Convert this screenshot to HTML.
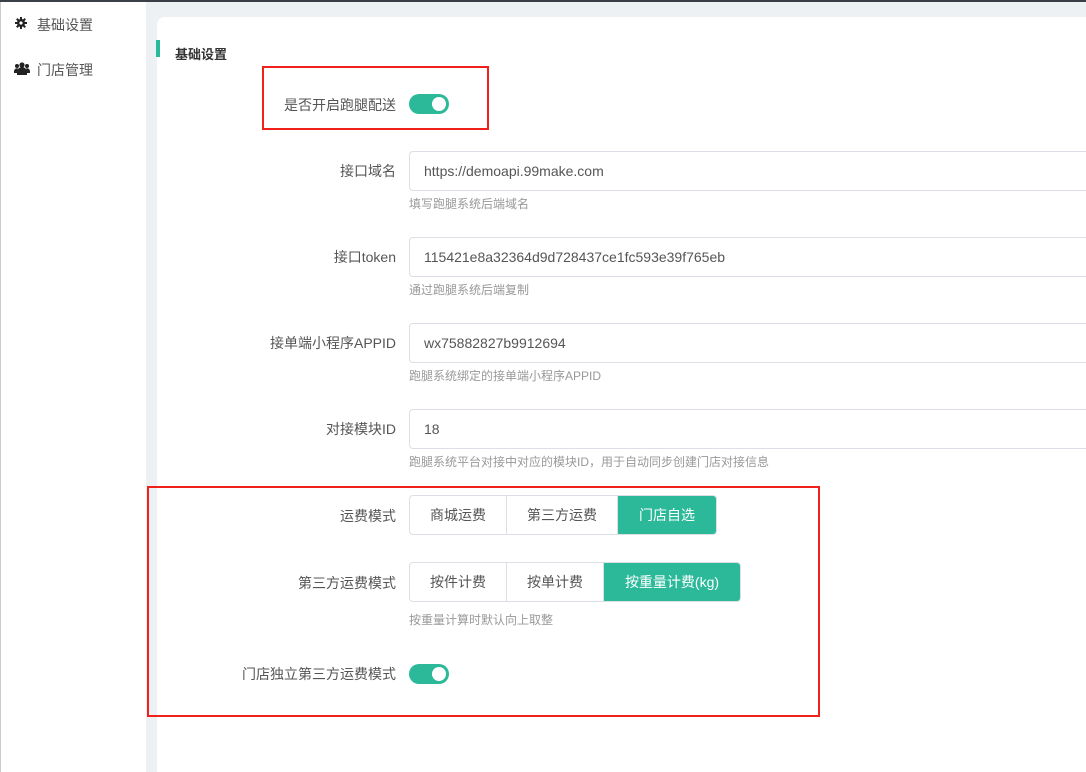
<!DOCTYPE html>
<html style="width:1086px;height:772px;overflow:hidden"><head><meta charset="utf-8"><style>
*{margin:0;padding:0;box-sizing:border-box}
body{width:1086px;height:772px;overflow:hidden;background:#eef1f4;font-family:"Liberation Sans","Noto Sans CJK SC",sans-serif;position:relative;color:#606266}
.top{position:absolute;left:0;top:0;width:1086px;height:2px;background:#3a3f48}
.side{position:absolute;left:0;top:2px;width:146px;height:770px;background:#fff;border-left:1px solid #ccc}
.side div{position:absolute;left:36px;font-size:14px;color:#555}
.side svg{position:absolute}
.card{position:absolute;left:157px;top:17px;width:929px;height:755px;background:#fff;border-radius:8px 0 0 0}
.abs{position:absolute}
.lbl{position:absolute;right:690px;font-size:14px;color:#555;text-align:right;white-space:nowrap}
.inp{position:absolute;left:409px;width:677px;height:40px;border:1px solid #dcdfe6;border-right:none;border-radius:4px 0 0 4px;font-size:14px;color:#555;padding-left:14px;line-height:38px}
.help{position:absolute;left:409px;font-size:12px;color:#999}
.tg{position:absolute;left:409px;width:40px;height:20px;border-radius:10px;background:#2bb999}
.tg:after{content:"";position:absolute;right:3px;top:3px;width:14px;height:14px;border-radius:50%;background:#fff}
.seg{position:absolute;left:409px;display:flex;border:1px solid #dcdfe6;border-radius:4px;overflow:hidden;height:40px}
.seg span{display:block;line-height:38px;text-align:center;font-size:14px;color:#555;border-right:1px solid #dcdfe6}
.seg span.on{background:#2bb999;color:#fff;border:none}
.red{position:absolute;border:2px solid #f0201a}
</style></head><body>
<div class="top"></div>
<div class="side">
<svg style="left:14px;top:15px" width="12" height="12" viewBox="0 0 12 12"><g fill="#222"><circle cx="6" cy="6" r="4"/><rect x="5" y="0" width="2" height="12"/><rect x="0" y="5" width="12" height="2"/><rect x="5" y="0" width="2" height="12" transform="rotate(45 6 6)"/><rect x="5" y="0" width="2" height="12" transform="rotate(-45 6 6)"/></g><circle cx="6" cy="6" r="1.6" fill="#fff"/></svg>
<div style="top:13px">基础设置</div>
<svg style="left:13px;top:60px" width="16" height="13" viewBox="0 0 16 13"><g fill="#222"><circle cx="8" cy="3" r="2.6"/><circle cx="3" cy="4" r="2"/><circle cx="13" cy="4" r="2"/><path d="M3 13v-3a5 5 0 0 1 10 0v3z"/><path d="M0 11v-2a3 3 0 0 1 4-2.5L3 11z"/><path d="M16 11v-2a3 3 0 0 0-4-2.5l1 4.5z"/></g></svg>
<div style="top:58px">门店管理</div>
</div>
<div class="card"></div>
<div class="abs" style="left:156px;top:40px;width:4px;height:17px;background:#2bb999"></div>
<div class="abs" style="left:175px;top:44px;font-size:13px;font-weight:bold;color:#333">基础设置</div>

<div class="lbl" style="top:95px">是否开启跑腿配送</div>
<div class="tg" style="top:94px"></div>

<div class="lbl" style="top:161px">接口域名</div>
<div class="inp" style="top:151px">https://demoapi.99make.com</div>
<div class="help" style="top:195px">填写跑腿系统后端域名</div>

<div class="lbl" style="top:247px">接口token</div>
<div class="inp" style="top:237px">115421e8a32364d9d728437ce1fc593e39f765eb</div>
<div class="help" style="top:281px">通过跑腿系统后端复制</div>

<div class="lbl" style="top:333px">接单端小程序APPID</div>
<div class="inp" style="top:323px">wx75882827b9912694</div>
<div class="help" style="top:367px">跑腿系统绑定的接单端小程序APPID</div>

<div class="lbl" style="top:419px">对接模块ID</div>
<div class="inp" style="top:409px">18</div>
<div class="help" style="top:453px">跑腿系统平台对接中对应的模块ID，用于自动同步创建门店对接信息</div>

<div class="lbl" style="top:506px">运费模式</div>
<div class="seg" style="top:495px"><span style="width:97px">商城运费</span><span style="width:111px">第三方运费</span><span class="on" style="width:98px">门店自选</span></div>

<div class="lbl" style="top:573px">第三方运费模式</div>
<div class="seg" style="top:562px"><span style="width:97px">按件计费</span><span style="width:97px">按单计费</span><span class="on" style="width:136px">按重量计费(kg)</span></div>
<div class="help" style="top:611px">按重量计算时默认向上取整</div>

<div class="lbl" style="top:664px">门店独立第三方运费模式</div>
<div class="tg" style="top:664px"></div>

<div class="red" style="left:262px;top:66px;width:227px;height:64px"></div>
<div class="red" style="left:147px;top:486px;width:673px;height:231px"></div>
</body></html>
